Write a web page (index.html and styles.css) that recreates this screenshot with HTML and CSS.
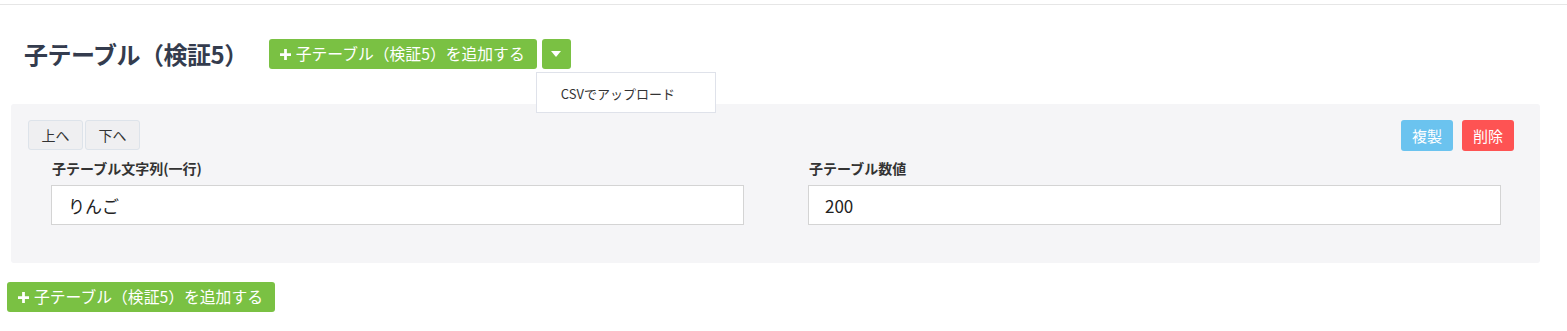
FILE: index.html
```html
<!DOCTYPE html>
<html lang="ja">

<head>
    <meta charset="UTF-8">
    <meta name="viewport" content="width=device-width, initial-scale=1.0">
    <title>子テーブル（検証5）</title>
    <link rel="stylesheet" href="styles.css">
</head>

<body>
    <div class="topline"></div>

    <div class="table-header">
        <h2 class="table-title">子テーブル（検証5）</h2>
        <div class="btn-group">
            <button class="btn btn-green">
                <svg class="icon-plus" viewBox="0 0 12 12"><path d="M4.5 0h3v4.5H12v3H7.5V12h-3V7.5H0v-3h4.5z" fill="#fff"/></svg>子テーブル（検証5）を追加する
            </button>
            <button class="btn btn-green btn-caret">
                <svg class="icon-caret" viewBox="0 0 10 6"><path d="M0 0h10L5 6z" fill="#fff"/></svg>
            </button>
            <div class="dropdown-menu">
                <a href="#">CSVでアップロード</a>
            </div>
        </div>
    </div>

    <div class="row-panel">
        <div class="row-toolbar">
            <div class="move-btns">
                <button class="btn btn-move">上へ</button>
                <button class="btn btn-move">下へ</button>
            </div>
            <div class="row-actions">
                <button class="btn btn-copy">複製</button>
                <button class="btn btn-delete">削除</button>
            </div>
        </div>
        <div class="row-fields">
            <div class="field">
                <label for="str1">子テーブル文字列(一行)</label>
                <input type="text" id="str1" value="りんご">
            </div>
            <div class="field">
                <label for="num1">子テーブル数値</label>
                <input type="text" id="num1" value="200">
            </div>
        </div>
    </div>

    <div class="footer-add">
        <button class="btn btn-green">
            <svg class="icon-plus" viewBox="0 0 12 12"><path d="M4.5 0h3v4.5H12v3H7.5V12h-3V7.5H0v-3h4.5z" fill="#fff"/></svg>子テーブル（検証5）を追加する
        </button>
    </div>
</body>

</html>
```

FILE: styles.css
```css
body {
    margin: 0;
    background-color: #ffffff;
    color: #333;
    font-family: "Noto Sans CJK JP", "Noto Sans", sans-serif;
}

.topline {
    height: 4px;
    border-bottom: 1px solid #e6e6e6;
}

.table-header {
    display: flex;
    align-items: center;
    margin-top: 34px;
    padding-left: 24px;
}

.table-title {
    margin: 0 21px 0 0;
    font-size: 24px;
    font-weight: bold;
    color: #343c4e;
    line-height: 30px;
    letter-spacing: -0.5px;
}

.btn-group {
    position: relative;
    display: flex;
    gap: 5px;
}

.btn {
    font-family: inherit;
    border: none;
    border-radius: 3px;
    cursor: pointer;
    padding: 0;
}

.btn-green {
    display: flex;
    align-items: center;
    height: 30px;
    padding: 0 12px 0 11px;
    background-color: #7ac143;
    color: #ffffff;
    font-size: 15.8px;
    line-height: 30px;
}

.icon-plus {
    width: 11px;
    height: 11px;
    margin-right: 5px;
}

.btn-caret {
    width: 29px;
    justify-content: center;
    padding: 0;
}

.icon-caret {
    width: 10px;
    height: 6px;
}

.dropdown-menu {
    position: absolute;
    top: 33px;
    right: -145px;
    width: 178px;
    height: 39px;
    background-color: #ffffff;
    border: 1px solid #dfe2ea;
    z-index: 10;
}

.dropdown-menu a {
    display: block;
    padding-left: 24px;
    line-height: 41px;
    font-size: 13px;
    color: #333;
    text-decoration: none;
}

.row-panel {
    margin: 35px 27px 0 11px;
    padding: 16px 26px 38px 17px;
    background-color: #f5f5f7;
    border-radius: 3px;
}

.row-toolbar {
    display: flex;
    justify-content: space-between;
    align-items: flex-start;
}

.move-btns {
    display: flex;
    gap: 2px;
}

.btn-move {
    width: 55px;
    height: 30px;
    background-color: #efeff1;
    border: 1px solid #dde3ea;
    font-size: 14px;
    color: #333;
}

.row-actions {
    display: flex;
    gap: 9px;
}

.btn-copy,
.btn-delete {
    width: 52px;
    height: 31px;
    color: #ffffff;
    font-size: 15px;
}

.btn-copy {
    background-color: #6bc3ef;
}

.btn-delete {
    background-color: #fe5353;
}

.row-fields {
    display: grid;
    grid-template-columns: 1fr 1fr;
    gap: 64px;
    margin: 7px 13px 0 23px;
}

.field label {
    display: block;
    margin-left: 1px;
    margin-bottom: 7px;
    font-size: 14px;
    font-weight: 600;
    line-height: 20px;
    color: #333;
}

.field input {
    box-sizing: border-box;
    width: 100%;
    height: 40px;
    padding: 0 16px;
    border: 1px solid #d4d4d4;
    background-color: #ffffff;
    font-family: inherit;
    font-size: 17px;
    color: #222;
}

.footer-add {
    display: flex;
    margin: 19px 0 0 7px;
}
```
